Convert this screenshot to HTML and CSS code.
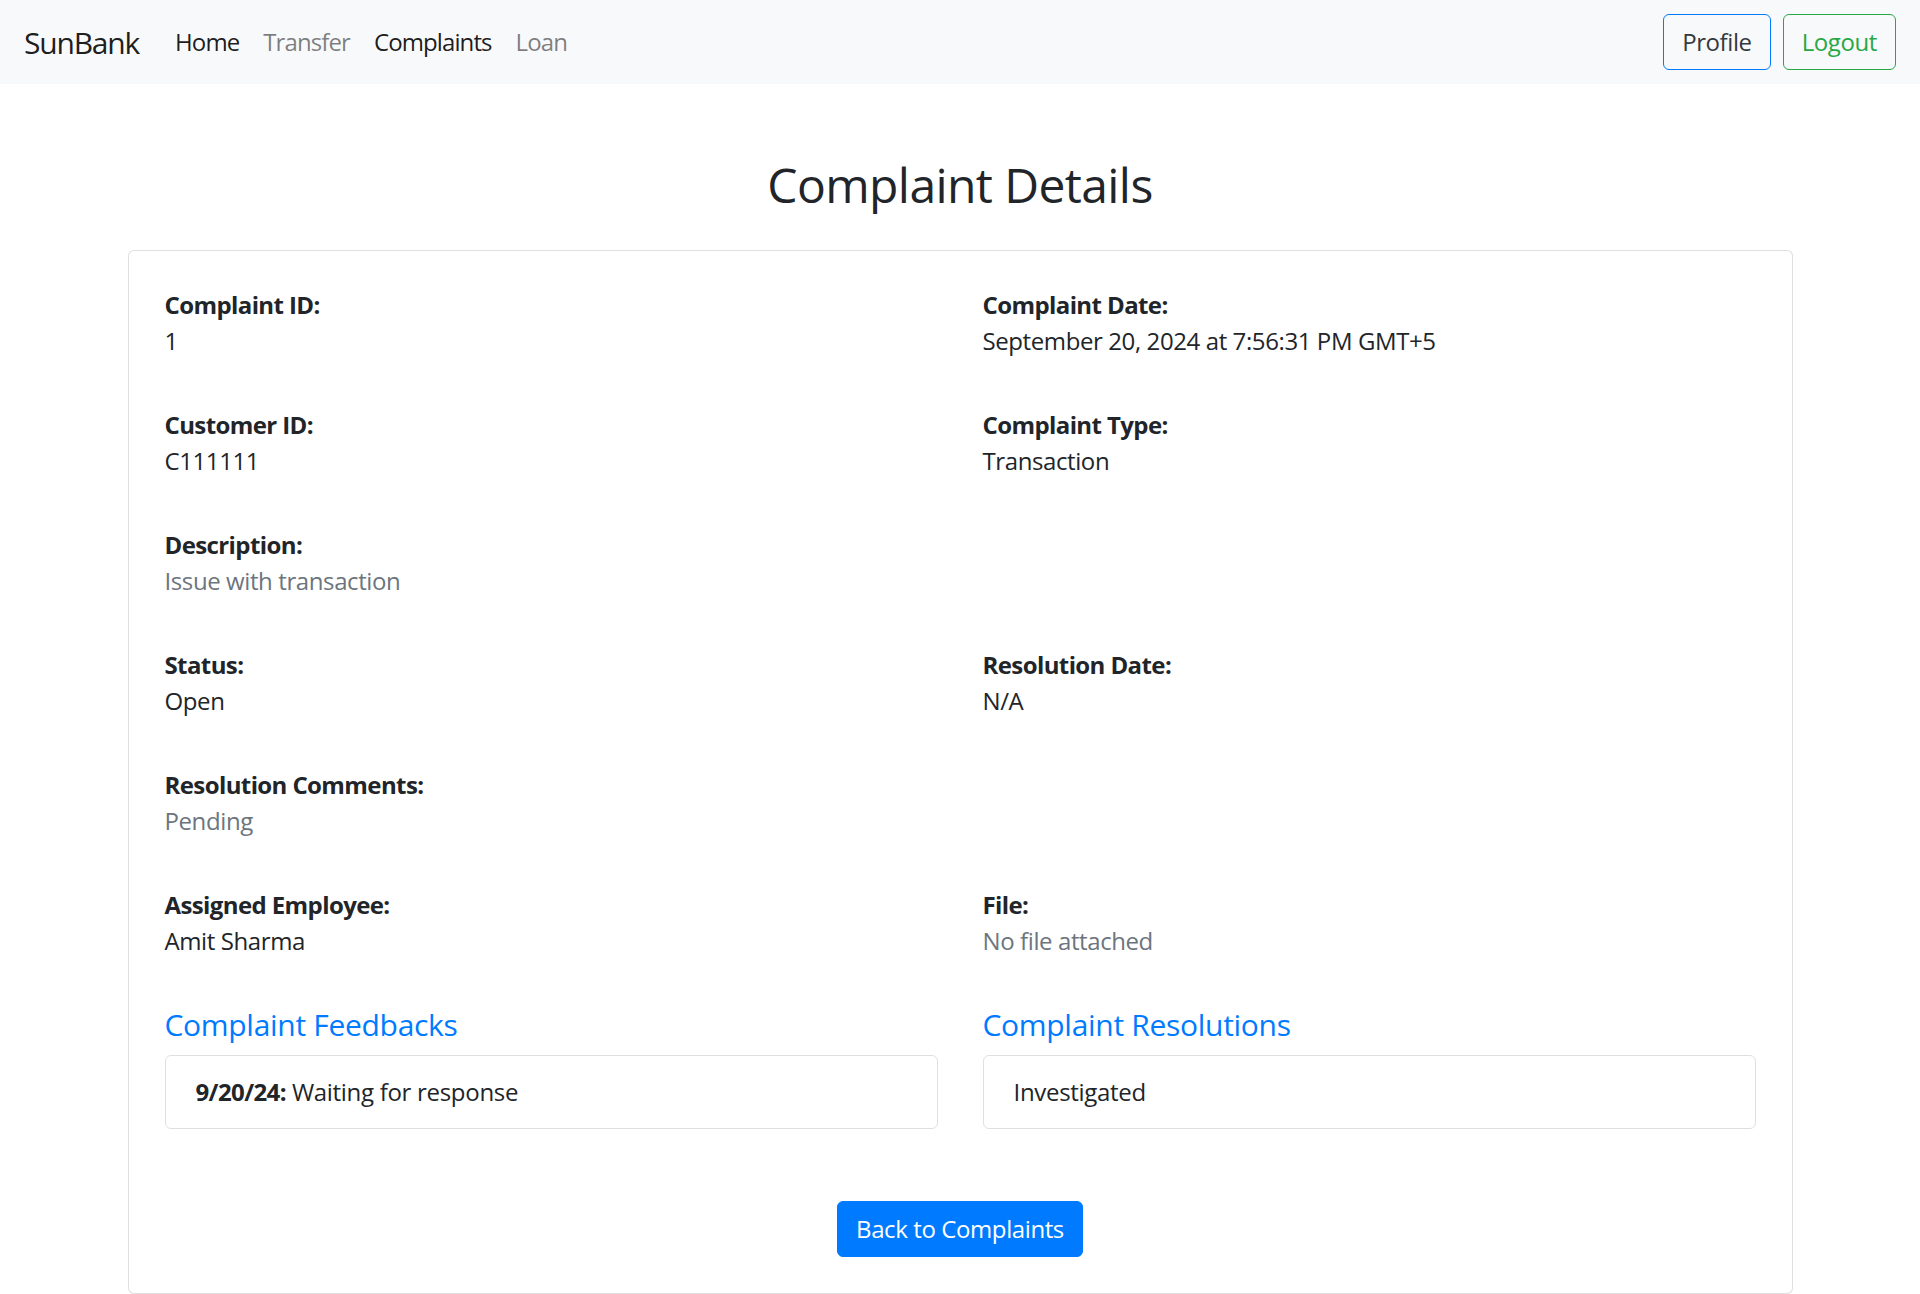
FILE: index.html
```html
<!DOCTYPE html>
<html lang="en">
<head>
<meta charset="utf-8">
<title>Complaint Details - SunBank</title>
<link rel="stylesheet" href="styles.css">
</head>
<body>
<nav class="navbar">
  <div class="nav-left">
    <a class="brand" href="#">SunBank</a>
    <ul class="nav-links">
      <li><a class="nav-link active" href="#">Home</a></li>
      <li><a class="nav-link" href="#">Transfer</a></li>
      <li><a class="nav-link active" href="#">Complaints</a></li>
      <li><a class="nav-link" href="#">Loan</a></li>
    </ul>
  </div>
  <div class="nav-right">
    <button class="btn btn-outline-primary">Profile</button>
    <button class="btn btn-outline-success">Logout</button>
  </div>
</nav>

<main class="container">
  <h2 class="page-title">Complaint Details</h2>
  <div class="card">
    <div class="card-body">
      <div class="fields">
        <div class="field"><strong>Complaint ID:</strong><span>1</span></div>
        <div class="field"><strong>Complaint Date:</strong><span>September 20, 2024 at 7:56:31 PM GMT+5</span></div>
        <div class="field"><strong>Customer ID:</strong><span>C111111</span></div>
        <div class="field"><strong>Complaint Type:</strong><span>Transaction</span></div>
        <div class="field"><strong>Description:</strong><span class="muted">Issue with transaction</span></div>
        <div class="field"></div>
        <div class="field"><strong>Status:</strong><span>Open</span></div>
        <div class="field"><strong>Resolution Date:</strong><span>N/A</span></div>
        <div class="field"><strong>Resolution Comments:</strong><span class="muted">Pending</span></div>
        <div class="field"></div>
        <div class="field"><strong>Assigned Employee:</strong><span>Amit Sharma</span></div>
        <div class="field"><strong>File:</strong><span class="muted">No file attached</span></div>
      </div>

      <div class="sections">
        <section>
          <h5 class="section-title">Complaint Feedbacks</h5>
          <ul class="list-group">
            <li class="list-item"><strong>9/20/24:</strong> Waiting for response</li>
          </ul>
        </section>
        <section>
          <h5 class="section-title">Complaint Resolutions</h5>
          <ul class="list-group">
            <li class="list-item">Investigated</li>
          </ul>
        </section>
      </div>

      <div class="actions">
        <a class="btn btn-primary" href="#">Back to Complaints</a>
      </div>
    </div>
  </div>
</main>
</body>
</html>
```

FILE: styles.css
```css
* { box-sizing: border-box; }

html, body {
  margin: 0;
  padding: 0;
}

body {
  font-family: "Open Sans", "Noto Sans", "Liberation Sans", sans-serif;
  font-size: 24px;
  line-height: 1.5;
  color: #212529;
  background: #ffffff;
}

a { text-decoration: none; }

.navbar {
  display: flex;
  align-items: center;
  justify-content: space-between;
  height: 84px;
  padding: 0 24px;
  background: #f8f9fa;
}

.nav-left {
  display: flex;
  align-items: center;
}

.brand {
  font-size: 30px;
  line-height: 45px;
  color: rgba(0, 0, 0, 0.9);
  margin-right: 24px;
  letter-spacing: -1.2px;
}

.nav-links {
  display: flex;
  list-style: none;
  margin: 0;
  padding: 0;
}

.nav-link {
  display: block;
  padding: 12px 12px;
  color: rgba(0, 0, 0, 0.5);
  letter-spacing: -0.9px;
}

.nav-link.active { color: rgba(0, 0, 0, 0.9); }

.nav-right {
  display: flex;
  gap: 12px;
}

.btn {
  display: inline-block;
  font-family: inherit;
  font-size: 24px;
  line-height: 36px;
  padding: 9px 18px;
  border: 1px solid transparent;
  border-radius: 6px;
  background: transparent;
  letter-spacing: -0.4px;
  cursor: pointer;
}

.btn-outline-primary {
  border-color: #007bff;
  color: #343a40;
}

.btn-outline-success {
  border-color: #28a745;
  color: #28a745;
}

.btn-primary {
  background: #007bff;
  border-color: #007bff;
  color: #ffffff;
}

.container {
  width: 1710px;
  margin: 72px auto 0;
  padding: 0 22.5px;
}

.page-title {
  margin: 0 0 36px;
  font-size: 48px;
  font-weight: 500;
  line-height: 1.2;
  text-align: center;
  letter-spacing: -0.6px;
}

.card {
  border: 1px solid rgba(0, 0, 0, 0.125);
  border-radius: 6px;
  background: #fff;
}

.card-body {
  padding: 36px;
}

.fields {
  display: grid;
  grid-template-columns: 1fr 1fr;
  column-gap: 45px;
  row-gap: 48px;
}

.field {
  display: flex;
  flex-direction: column;
  min-height: 72px;
  letter-spacing: -0.4px;
}

.field strong { font-weight: 700; letter-spacing: -0.6px; }

.muted { color: #6c757d; }

.sections {
  display: grid;
  grid-template-columns: 1fr 1fr;
  column-gap: 45px;
  margin-top: 48px;
}

.section-title {
  margin: 0 0 12px;
  font-size: 30px;
  font-weight: 500;
  line-height: 1.2;
  color: #007bff;
  letter-spacing: -0.3px;
}

.list-group {
  list-style: none;
  margin: 0;
  padding: 0;
}

.list-item {
  padding: 18px 30px;
  border: 1px solid rgba(0, 0, 0, 0.125);
  border-radius: 6px;
  letter-spacing: -0.3px;
}

.list-item strong { letter-spacing: -0.6px; }

.actions {
  display: flex;
  justify-content: center;
  margin-top: 72px;
}
```
